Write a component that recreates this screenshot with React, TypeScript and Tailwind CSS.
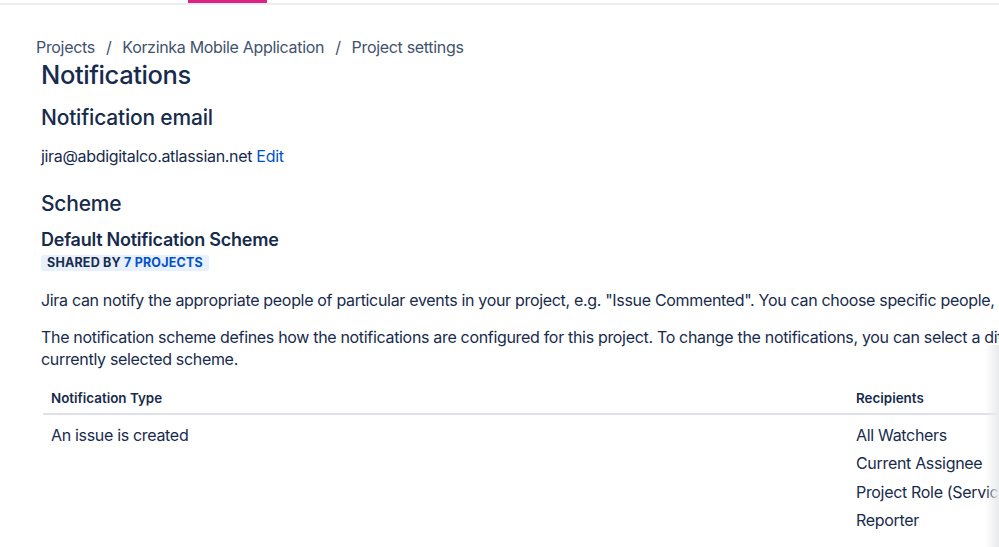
import React from "react";

const recipients = ["All Watchers", "Current Assignee", "Project Role (Service Desk Team)", "Reporter"];

export default function App() {
  return (
    <div
      className="relative h-[547px] w-full overflow-hidden bg-white text-[#172b4d] tracking-[-0.32px]"
      style={{ fontFamily: "Inter, 'Noto Sans', sans-serif" }}
    >
      {/* top nav strip */}
      <div className="h-[5px] border-b-2 border-[#ebecf0]">
        <div className="ml-[188px] h-[3px] w-[79px] bg-[#dc2384]" />
      </div>

      <div className="pl-[36px] pt-[32px]">
        {/* Breadcrumbs */}
        <nav className="flex items-center text-[16px] leading-[20px] text-[#42526e]">
          <span>Projects</span>
          <span className="px-[11px]">/</span>
          <span>Korzinka Mobile Application</span>
          <span className="px-[11px]">/</span>
          <span>Project settings</span>
        </nav>

        <div className="pl-[5px]">
          <h1 className="mt-[3px] text-[25.5px] font-medium leading-[30px] tracking-[-0.4px]">Notifications</h1>

          <h2 className="mt-[14px] text-[21px] font-medium leading-[28px] tracking-[-0.2px]">Notification email</h2>
          <p className="mt-[14px] text-[16px] leading-[20px]">
            jira@abdigitalco.atlassian.net <span className="text-[#0052cc]">Edit</span>
          </p>

          <h2 className="mt-[24px] text-[21px] font-medium leading-[28px] tracking-[-0.2px]">Scheme</h2>
          <h3 className="mt-[10px] text-[18px] font-semibold leading-[24px] tracking-[-0.25px]">
            Default Notification Scheme
          </h3>
          <div className="mt-[3px] w-fit rounded-[3px] bg-[#e9f0fd] px-[6px] text-[12.5px] font-bold uppercase leading-[16px] tracking-[0.2px]">
            Shared by <span className="text-[#0052cc]">7 projects</span>
          </div>

          <p className="mt-[18px] whitespace-nowrap text-[16px] leading-[22px]">
            Jira can notify the appropriate people of particular events in your project, e.g. "Issue Commented". You can
            choose specific people, groups, or roles to receive notifications.
          </p>
          <p className="mt-[15px] whitespace-nowrap text-[16px] leading-[22px]">
            The notification scheme defines how the notifications are configured for this project. To change the
            notifications, you can select a different notification scheme, or modify the
            <br />
            currently selected scheme.
          </p>

          {/* Table */}
          <div className="mt-[13px] w-[1100px] pl-[2px]">
            <div className="grid grid-cols-[805px_1fr] border-b-2 border-[#dfe1e6] px-[8px] py-[6px] text-[13.4px] font-semibold leading-[18px] tracking-normal">
              <span>Notification Type</span>
              <span>Recipients</span>
            </div>
            <div className="grid grid-cols-[805px_1fr] px-[8px] pt-[9px] text-[16px]">
              <span className="leading-[22px]">An issue is created</span>
              <ul className="flex flex-col gap-[6.3px]">
                {recipients.map((r) => (
                  <li key={r} className="whitespace-nowrap leading-[22px]">
                    {r}
                  </li>
                ))}
              </ul>
            </div>
          </div>
        </div>
      </div>

      {/* edge of a panel sliding in from the right */}
      <div className="pointer-events-none absolute bottom-0 right-0 top-[345px] w-[14px] bg-gradient-to-r from-transparent to-[#e9eaec]" />
    </div>
  );
}
